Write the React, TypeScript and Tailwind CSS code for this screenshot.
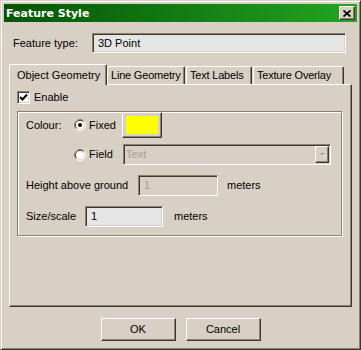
import React from 'react'

// classic 3D edges
const raised =
  'border border-t-white border-l-white border-r-[#3c3830] border-b-[#3c3830] shadow-[inset_-1px_-1px_0_#8b816f]'
const sunken =
  'border border-t-[#8b816f] border-l-[#8b816f] border-r-white border-b-white shadow-[inset_1px_1px_0_#3c3830,inset_-1px_-1px_0_#d8d0c5]'

function Radio({ checked }: { checked?: boolean }) {
  return (
    <svg width="12" height="12" viewBox="0 0 12 12" className="shrink-0">
      <circle cx="6" cy="6" r="5.5" fill="#d8d0c5" />
      <path d="M2.11 9.89 A5.5 5.5 0 0 1 9.89 2.11" fill="none" stroke="#8b816f" />
      <path d="M9.89 2.11 A5.5 5.5 0 0 1 2.11 9.89" fill="none" stroke="#ffffff" />
      <path d="M2.82 9.18 A4.5 4.5 0 0 1 9.18 2.82" fill="none" stroke="#3c3830" />
      <circle cx="6" cy="6" r="4" fill="#ffffff" />
      {checked && <circle cx="6" cy="6" r="2" fill="#000" />}
    </svg>
  )
}

function Checkbox() {
  return (
    <span className={`flex h-[13px] w-[13px] shrink-0 items-center justify-center bg-white ${sunken}`}>
      <svg width="9" height="9" viewBox="0 0 9 9">
        <polyline points="1,4 3.5,6.5 8,1.5" fill="none" stroke="#000" strokeWidth="1.9" />
      </svg>
    </span>
  )
}

function Tab({ label, active, className }: { label: string; active?: boolean; className?: string }) {
  return (
    <div
      className={`flex items-center overflow-hidden whitespace-nowrap rounded-t-[2px] border-t border-l border-r border-t-white border-l-white border-r-[#3c3830] bg-[#d8d0c5] shadow-[inset_-1px_0_0_#8b816f] ${
        active ? 'relative z-10 h-[21px] pl-[7px]' : 'mt-[2px] h-[18px] pl-[3px] tracking-[-0.2px]'
      } ${className ?? ''}`}
    >
      {label}
    </div>
  )
}

export default function App() {
  return (
    <div
      className="h-[350px] w-[361px] bg-[#d8d0c5] text-[11px] leading-none text-black"
      style={{ fontFamily: '"Liberation Sans", Arial, sans-serif' }}
    >
      <div className="h-[350px] w-[361px] border border-t-[#d8d0c5] border-l-[#d8d0c5] border-r-[#3c3830] border-b-[#3c3830] p-[3px] shadow-[inset_1px_1px_0_#ffffff,inset_-1px_-1px_0_#8b816f]">
        {/* title bar */}
        <div className="flex h-[18px] items-center justify-between bg-gradient-to-r from-[#045404] to-[#22a622] pl-[2px] pr-[2px]">
          <span
            className="text-[11px] font-bold text-white"
            style={{ fontFamily: '"DejaVu Sans", Verdana, sans-serif' }}
          >
            Feature Style
          </span>
          <button type="button" className={`flex h-[14px] w-[16px] items-center justify-center bg-[#d8d0c5] ${raised}`}>
            <svg width="8" height="7" viewBox="0 0 8 7">
              <path d="M0.5 0.5 L7.5 6.5 M7.5 0.5 L0.5 6.5" stroke="#000" strokeWidth="1.7" />
            </svg>
          </button>
        </div>

        {/* feature type */}
        <div className="mt-[11px] flex items-center pl-[9px]">
          <span className="w-[79px]">Feature type:</span>
          <div className={`flex h-[20px] w-[254px] items-center bg-[#e5e5e5] pl-[5px] ${sunken}`}>3D Point</div>
        </div>

        {/* tabs */}
        <div className="mt-[11px] flex h-[20px] items-start pl-[5px]">
          <Tab label="Object Geometry" active className="w-[98px]" />
          <Tab label="Line Geometry" className="w-[78px]" />
          <Tab label="Text Labels" className="ml-px w-[66px]" />
          <Tab label="Texture Overlay" className="ml-px w-[91px]" />
        </div>

        <div className="ml-[5px] h-[223px] w-[343px] border border-t-white border-l-white border-r-[#3c3830] border-b-[#3c3830] pl-[7px] pt-[6px] shadow-[inset_-1px_-1px_0_#8b816f]">
          <div className="flex h-[13px] items-center">
            <Checkbox />
            <span className="ml-[4px]">Enable</span>
          </div>

          {/* group box */}
          <div className="mt-[7px] h-[125px] w-[325px] border border-[#8b816f] pl-[8px] shadow-[inset_1px_1px_0_#ffffff,1px_1px_0_#ffffff]">
            <div className="flex h-[26px] items-center">
              <span className="w-[48px]">Colour:</span>
              <Radio checked />
              <span className="ml-[3px] w-[33px]">Fixed</span>
              <div className={`flex h-[26px] w-[40px] items-center justify-center bg-[#d8d0c5] ${raised}`}>
                <div className="h-[18px] w-[32px] bg-[#ffff00]" />
              </div>
            </div>

            <div className="mt-[6px] flex h-[21px] items-center">
              <span className="w-[48px]" />
              <Radio />
              <span className="ml-[3px] w-[34px]">Field</span>
              <div className={`flex h-[21px] w-[208px] items-center justify-between bg-[#d8d0c5] pl-[2px] pr-[1px] ${sunken}`}>
                <span className="text-[#a89e8a]">Text</span>
                <span className={`flex h-[17px] w-[14px] items-center justify-center bg-[#d8d0c5] ${raised}`}>
                  <svg width="7" height="5" viewBox="0 0 7 5">
                    <path d="M1 1 H6 L3.5 3.5 Z" fill="#a89e8a" />
                    <path d="M4 4 L6 2" stroke="#ffffff" strokeWidth="1" />
                  </svg>
                </span>
              </div>
            </div>

            <div className="mt-[10px] flex h-[21px] items-center">
              <span className="w-[112px]">Height above ground</span>
              <div className={`flex h-[21px] w-[80px] items-center bg-[#d8d0c5] pl-[5px] text-[#a89e8a] ${sunken}`}>1</div>
              <span className="ml-[9px]">meters</span>
            </div>

            <div className="mt-[10px] flex h-[21px] items-center">
              <span className="w-[59px]">Size/scale</span>
              <div className={`flex h-[21px] w-[78px] items-center bg-[#e5e5e5] pl-[5px] ${sunken}`}>1</div>
              <span className="ml-[11px]">meters</span>
            </div>
          </div>
        </div>

        {/* buttons */}
        <div className="mt-[11px] flex justify-center gap-[10px]">
          <button type="button" className={`h-[23px] w-[75px] bg-[#d8d0c5] ${raised}`}>
            OK
          </button>
          <button type="button" className={`h-[23px] w-[75px] bg-[#d8d0c5] ${raised}`}>
            Cancel
          </button>
        </div>
      </div>
    </div>
  )
}
